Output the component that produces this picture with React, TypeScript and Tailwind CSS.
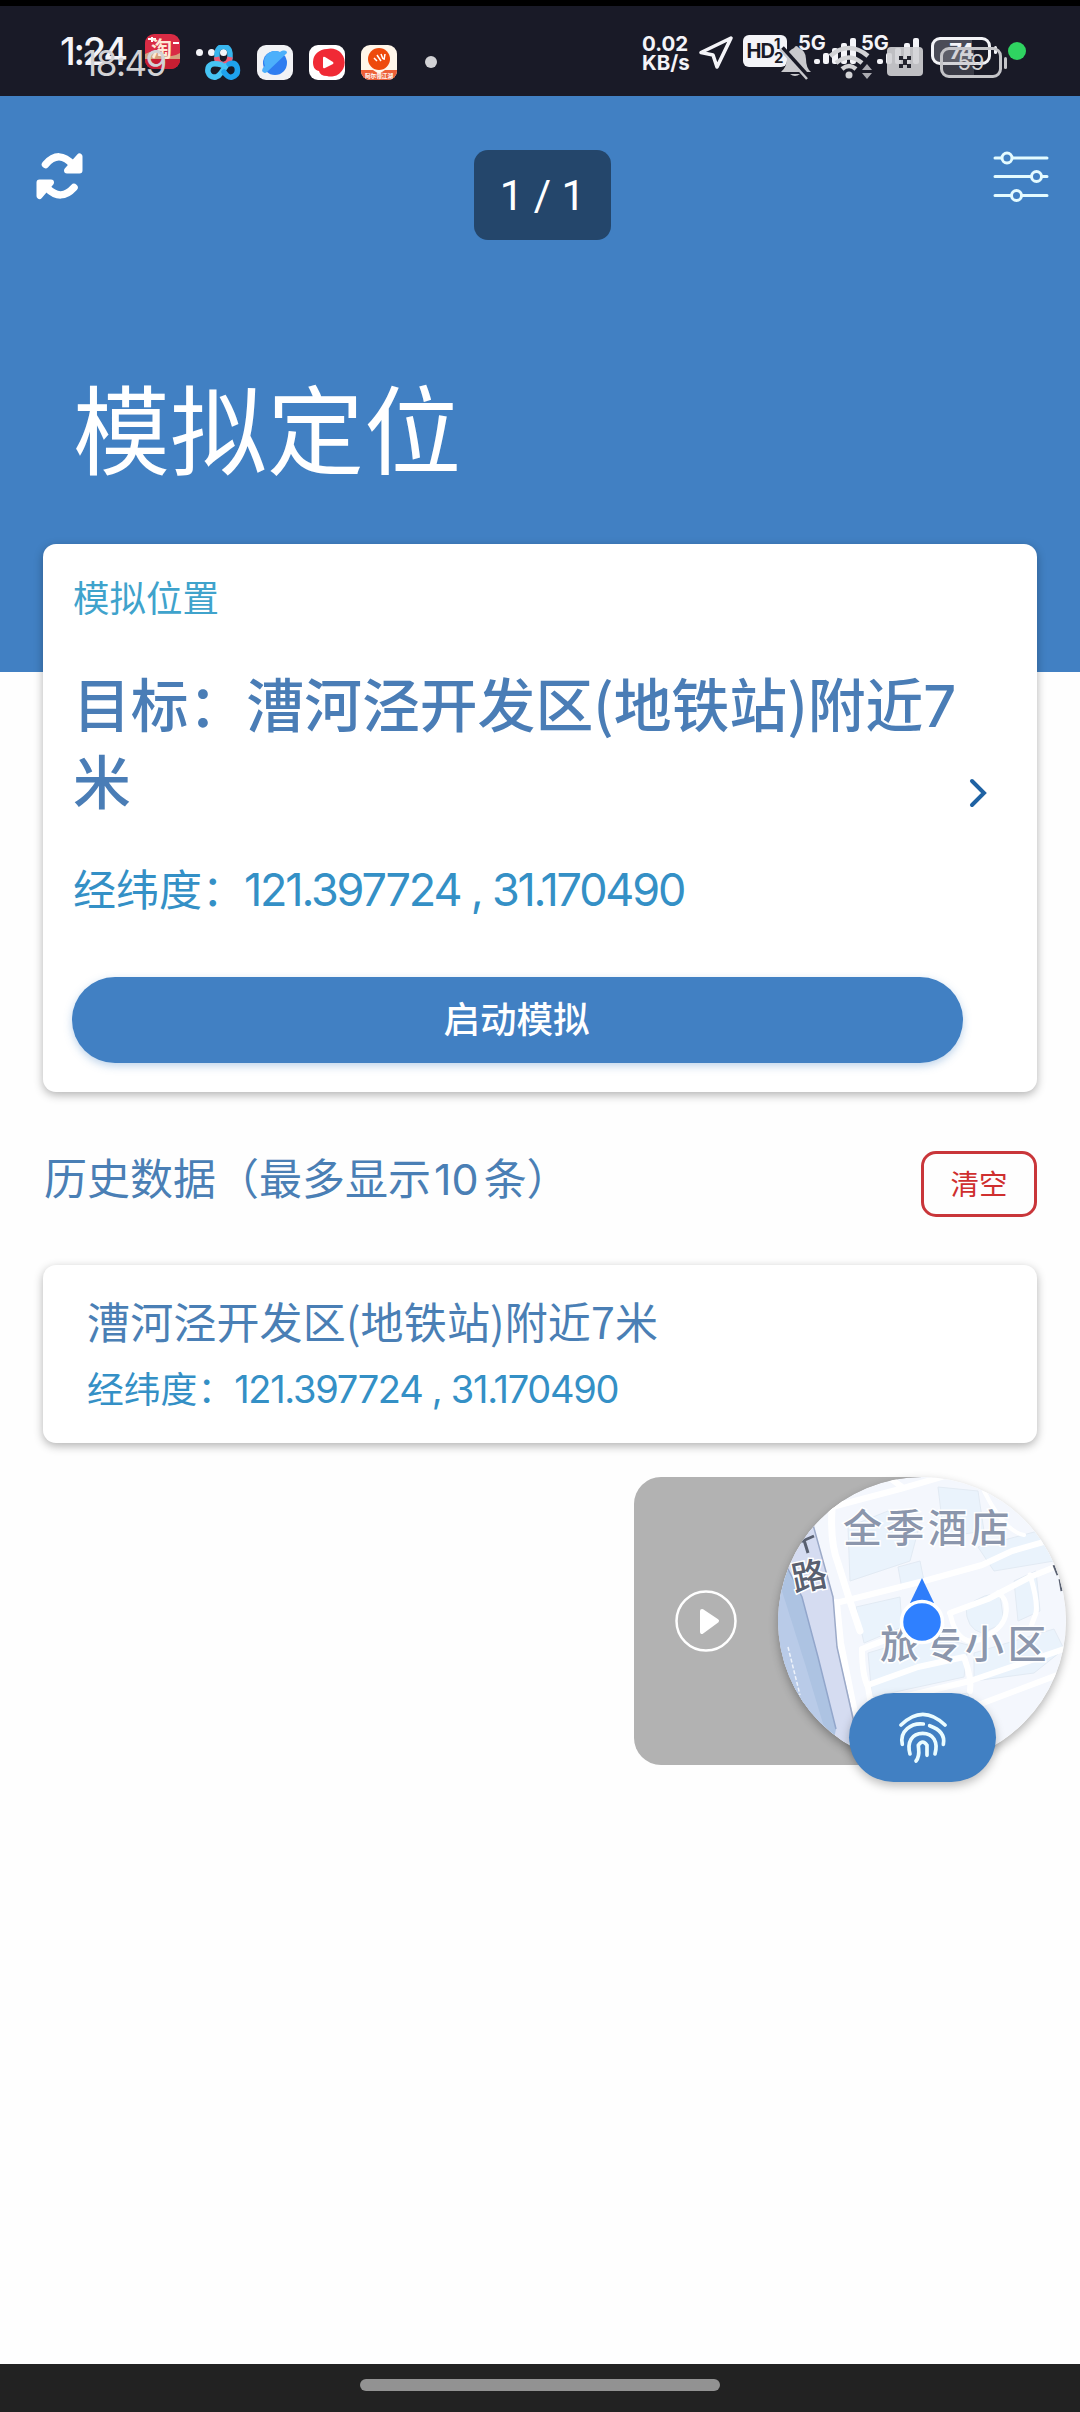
import type { ReactNode } from 'react'

const history = [{ id: 1, name: '漕河泾开发区(地铁站)附近7米', coords: '121.397724 , 31.170490' }]

function Signal() {
  return (
    <svg width="42" height="28" viewBox="0 0 42 28" fill="#f4f4f8">
      <rect x="0" y="22" width="6" height="5" rx="2" />
      <rect x="9" y="16" width="6" height="11" rx="2" />
      <rect x="18" y="11" width="6" height="16" rx="2" />
      <rect x="27" y="6" width="6" height="21" rx="2" />
      <rect x="36" y="1" width="6" height="26" rx="2" />
    </svg>
  )
}

function AppIcon({ children, className }: { children: ReactNode; className: string }) {
  return (
    <div className={`h-[35px] w-9 shrink-0 overflow-hidden rounded-[9px] ${className}`}>
      <svg width="36" height="35" viewBox="0 0 36 35">
        {children}
      </svg>
    </div>
  )
}

function StatusBar() {
  return (
    <div className="relative h-24 shrink-0 border-t-[6px] border-black bg-[#191a27] font-['Inter','Noto_Sans_CJK_SC',sans-serif]">
      <div className="flex h-full items-start pt-7 text-[#f4f4f8]">
        <span className="ml-[60px] w-[85px] shrink-0 text-[38px] leading-[35px] font-medium tracking-[-2.3px]">1:24</span>
        <div className="relative h-[35px] w-[35px] shrink-0 overflow-hidden rounded-[9px] bg-[#d92b44]">
          <svg width="35" height="35" viewBox="0 0 35 35">
            <path d="M0 20q8-5 17 0t18-1v6H0z" fill="#d3a07c" />
            <path d="M0 25h35v10H0z" fill="#c81e32" />
            <path d="M3 5h8M7 3v5M28 9h6" stroke="#fff" strokeWidth="2" />
            <text x="6" y="22" fontSize="21" fontWeight="700" fill="#ffe9d6">淘</text>
          </svg>
        </div>
        <div className="mt-[15px] ml-4 flex gap-[5px]">
          <i className="h-[7px] w-[7px] rounded-full bg-[#f4f4f8]" />
          <i className="h-[7px] w-[7px] rounded-full bg-[#f4f4f8]" />
          <i className="h-[7px] w-[7px] rounded-full bg-[#f4f4f8]" />
        </div>
        <div className="ml-[415px] w-[56px] shrink-0 text-[20.500px] leading-[19px] font-bold">
          <div>0.02</div>
          <div>KB/s</div>
        </div>
        <svg className="mt-px shrink-0" width="36" height="36" viewBox="0 0 36 36" fill="none" stroke="#f4f4f8" strokeWidth="3.6" strokeLinejoin="round">
          <path d="M33 3 L3 17.500 L15 20 L19 32 Z" />
        </svg>
        <div className="mt-px ml-[9px] flex h-8 w-[44px] shrink-0 items-center justify-center rounded-md bg-[#f4f4f8] text-[#191a27]">
          <span className="text-[20px] font-bold tracking-[-1px]">HD</span>
          <span className="text-[15px] leading-[14px] font-bold">
            1<br />2
          </span>
        </div>
        <span className="ml-[11px] w-4 shrink-0 text-[20px] leading-[19px] font-bold">5G</span>
        <div className="mt-[3px] shrink-0">
          <Signal />
        </div>
        <span className="ml-[5px] w-4 shrink-0 text-[20px] leading-[19px] font-bold">5G</span>
        <div className="mt-[3px] shrink-0">
          <Signal />
        </div>
        <div className="mt-[3px] ml-3 flex h-[28px] w-[60px] shrink-0 items-center justify-center rounded-[9px] border-[3.500px] border-[#f4f4f8] bg-gradient-to-r from-[#4b4c58] from-70% to-transparent to-70% text-[22px] font-bold tracking-[-1.5px]">
          74
        </div>
        <i className="mt-3 ml-[3px] h-2 w-[3px] rounded-sm bg-[#f4f4f8]" />
        <i className="mt-2 ml-[11px] h-[18px] w-[18px] shrink-0 rounded-full bg-[#2fd361]" />
      </div>

      {/* second status row, shown through the first one */}
      <div className="absolute inset-0 flex items-start pt-[39px] text-[#d2d2d5]">
        <span className="ml-[83px] w-[122px] shrink-0 text-[35px] leading-[36px] tracking-[-1.5px]">18:49</span>
        <svg className="shrink-0" width="36" height="36" viewBox="0 0 36 36" fill="none" strokeWidth="5.500" strokeLinecap="round">
          <path d="M12 8a6.500 6.500 0 0 1 13 0v5a6.500 6.500 0 0 1-13 0z" stroke="#38b6ee" />
          <path d="M11.500 12q1 7 6.500 8 6-1 7-8" stroke="#ef5a72" strokeLinecap="butt" />
          <path d="M17 20q-6-2-10-1-5 2-4 8 2 6 8 5 3-1 5-4l5-7" stroke="#46c4f4" />
          <path d="M24 19q6-2 8 3 2 8-5 10-4 1-8-5" stroke="#1ea2ee" />
        </svg>
        <AppIcon className="ml-4 bg-[#f1f2f5]">
          <circle cx="18" cy="18" r="12" fill="#2f7df0" />
          <path d="M6 27c-2-1 0-5 2-6C4 11 14 3 23 7c3-2 7-2 7 1L10 27q-2 2-4 0z" fill="#4db0fb" />
        </AppIcon>
        <AppIcon className="ml-4 bg-white">
          <path d="M18 4a14 14 0 1 1 0 27q-7 0-8-5c-5-1-6-5-6-9A14 13 0 0 1 18 4z" fill="#f02a35" />
          <path d="M14 13q0-2 2-1l8 5q1 1 0 2l-8 4q-2 1-2-1z" fill="#fff" />
        </AppIcon>
        <AppIcon className="ml-4 bg-[#fff6ea]">
          <path d="M0 25h12l6 4 6-4h12v10H0z" fill="#ed6038" />
          <circle cx="18" cy="14" r="11" fill="#ee4a0c" />
          <path d="M13 13l3 3M16 10l4 6M20 9l2 5M24 9l-1 6" stroke="#fff" strokeWidth="1.500" />
          <text x="4" y="33" fontSize="5.600" fontWeight="700" fill="#fff">阿尔领江湖</text>
        </AppIcon>
        <i className="mt-[11px] ml-[28px] h-3 w-3 shrink-0 rounded-full bg-[#d2d2d5]" />
        <svg className="ml-[342px] shrink-0" width="34" height="36" viewBox="0 0 34 36" fill="#c9c9cd">
          <path d="M2 27q6-5 6-14 1-8 7-10 2-4 5 0 7 3 7 11 0 9 5 13z" />
          <path d="M11 29h10q-5 4-10 0z" />
          <path d="M3 3L30 33" stroke="#191a27" strokeWidth="5" />
          <path d="M1 4L28 34" stroke="#c9c9cd" strokeWidth="2.500" />
        </svg>
        <svg className="ml-[16px] shrink-0" width="48" height="36" viewBox="0 0 48 36" fill="none" stroke="#d2d2d5" strokeWidth="4.500">
          <path d="M1 11Q20-5 39 11M7 18q13-11 26 0M13 24q7-6 14 0" />
          <circle cx="20" cy="30" r="3.500" fill="#d2d2d5" stroke="none" />
          <path d="M33 25l5-6 5 6zM33 28l5 6 5-6z" fill="#aaaab0" stroke="none" />
        </svg>
        <div className="mt-0.5 ml-[10px] flex h-[29px] w-9 shrink-0 items-center justify-center rounded-[4px] bg-[#d2d2d5]/90">
          <svg width="16" height="16" viewBox="0 0 16 16" fill="#24252f">
            <path d="M2 2h4v4H2zM10 2h4v4h-4zM2 10h4v4H2zM10 10h4v4h-4zM6 5h4v6H6z" />
          </svg>
        </div>
        <div className="mt-0.5 ml-[17px] flex h-[31px] w-[62px] shrink-0 items-center justify-center rounded-[9px] border-[3px] border-[#c4c4c8] bg-gradient-to-r from-[#888890]/30 from-55% to-transparent to-55% text-[22px]">
          59
        </div>
        <i className="mt-3 ml-[2px] h-3 w-[3px] rounded-sm bg-[#c4c4c8]" />
      </div>
    </div>
  )
}

function Header() {
  return (
    <header className="h-[576px] shrink-0 bg-[#4180c3] text-white">
      <div className="flex items-start pt-[54px]">
        <svg className="mt-0.5 ml-[35px]" width="50" height="50" viewBox="0 0 50 50" fill="none" stroke="#fff" strokeLinecap="round" strokeLinejoin="round">
          <path d="M10.500 12.500Q24-3 38 13" strokeWidth="7.500" />
          <path d="M44.500 4.500V18.500H32Z" strokeWidth="6" fill="#fff" />
          <path d="M39 35.500Q26 50 12 36" strokeWidth="7.500" />
          <path d="M4.500 44V30.500H16Z" strokeWidth="6" fill="#fff" />
        </svg>
        <div className="ml-[389px] flex h-[90px] w-[137px] items-center justify-center rounded-[14px] bg-[#24466b] font-['Roboto',sans-serif] text-[42px]">
          1 / 1
        </div>
        <svg className="ml-[382px]" width="56" height="54" viewBox="0 0 56 54" fill="#4180c3" stroke="#e4fbff" strokeWidth="3" strokeLinecap="round">
          <path d="M2 8H54M2 26.500H54M2 45.500H54" />
          <circle cx="14" cy="8" r="5" />
          <circle cx="43.500" cy="26.500" r="5" />
          <circle cx="23.500" cy="45.500" r="5" />
        </svg>
      </div>
      <h1 className="mt-[135px] ml-[73px] text-[97px] leading-[100px] font-normal">模拟定位</h1>
    </header>
  )
}

function TargetCard() {
  return (
    <section className="mx-[43px] -mt-32 flex h-[548px] shrink-0 flex-col rounded-[13px] bg-white pl-[30px] shadow-[0_3px_10px_rgba(0,0,0,0.3)]">
      <div className="mt-[34px] text-[36.500px] leading-[38px] text-[#3fa3cc]">模拟位置</div>
      <div className="relative mt-[48px] flex">
        <p className="w-[900px] text-[57.800px] leading-[77px] font-medium text-[#4a7db6]">
          目标：漕河泾开发区(地铁站)附近<span className="font-['Inter'] leading-none">7</span>
          <br />米
        </p>
        <svg className="absolute top-[113px] left-[895px]" width="20" height="32" viewBox="0 0 20 32" fill="none" stroke="#1f62a3" strokeWidth="4" strokeLinecap="round">
          <path d="M4 4L16 16L4 28" />
        </svg>
      </div>
      <div className="mt-[46px] text-[43px] leading-[46px] whitespace-nowrap text-[#3490c6]">
        经纬度：<span className="-ml-px font-['Inter'] text-[45px] leading-none tracking-[-2.2px]">121.397724 , 31.170490</span>
      </div>
      <button className="mt-auto mb-[29px] -ml-px h-[86px] w-[891px] rounded-full bg-[#4180c3] pr-0.5 pb-1 text-[36.500px] font-medium text-white shadow-[0_3px_8px_rgba(65,128,195,0.35)]">
        启动模拟
      </button>
    </section>
  )
}

function HistoryList() {
  return (
    <section className="mx-[43px] shrink-0">
      <div className="mt-[59px] flex h-[66px] items-start justify-between">
        <h2 className="mt-0.5 ml-px text-[43px] leading-[46px] font-normal whitespace-nowrap text-[#4a7fb5]">
          历史数据（最多显示<span className="mr-[5px] ml-[3px] font-['Inter'] leading-none">10</span>条）
        </h2>
        <button className="h-[66px] w-[116px] rounded-[15px] border-[3px] border-[#c9363a] pb-0.5 text-[28.500px] text-[#cf2f2f]">清空</button>
      </div>
      {history.map((item) => (
        <div key={item.id} className="mt-12 h-[178px] rounded-[13px] bg-white pl-11 shadow-[0_3px_10px_rgba(0,0,0,0.3)]">
          <div className="pt-[32px] text-[43px] leading-[46px] tracking-[0.15px] text-[#4a7fb5]">{item.name}</div>
          <div className="mt-[24px] text-[36.800px] leading-[40px] text-[#3490c6]">
            经纬度：<span className="font-['Inter'] text-[38px] tracking-[-1.3px]">{item.coords}</span>
          </div>
        </div>
      ))}
    </section>
  )
}

function MiniMap() {
  return (
    <svg className="block rounded-full shadow-[0_4px_10px_rgba(0,0,0,0.3)]" width="288" height="288" viewBox="0 0 288 288">
      <defs>
        <clipPath id="lens">
          <circle cx="144" cy="144" r="144" />
        </clipPath>
      </defs>
      <g clipPath="url(#lens)">
        <rect width="288" height="288" fill="#f4f7fd" />
        <g fill="#eaf3fc" stroke="#e2eaf3" strokeWidth="1">
          <path d="M70 50l40-16 30 20-8 30-60 20z" />
          <path d="M160 10l40 4 6 40-40 6z" />
          <path d="M120 90l22-6 4 20-22 8z" />
          <path d="M78 130l44-10 2 30-38 16z" />
          <path d="M188 130q20-16 34-12l4 28-22 10q-16-4-16-26z" />
          <path d="M236 104l22-10 4 40-22 10z" />
          <path d="M90 176l60-18 40 10-4 32-92 20z" />
          <path d="M196 176l80-24 10 20-30 24-60 8z" />
          <path d="M110 230l80-14 10 60-80 4z" />
          <path d="M200 70l60-16 16 30-60 10z" />
        </g>
        <g fill="none" stroke="#fff" strokeWidth="6" strokeLinecap="round" strokeLinejoin="round">
          <path d="M54 30L84 22L122 12L170-2M108-2l16 12" />
          <path d="M54 32q-2 34 6 54l10 32 12 36" strokeWidth="7" />
          <path d="M58 126l16-4 72-18 58-16 30-14 56-16" />
          <path d="M172 136l38-14 42-22 40-16" />
          <path d="M84 172q0 26 6 38l4 24M84 172q40-16 60-20" />
          <path d="M172 136q4 20 14 26t24-4q16-8 18-22t-8-20M252 98q8 26 6 38l-6 16" strokeWidth="5" />
          <path d="M90 208l50-18 46-10q8 22 6 34" />
          <path d="M92 228l100-24 100-34M110 250l90-22 90-34" />
          <path d="M58 126l4 40 18 90" strokeWidth="8" />
          <path d="M206 14q20 40 40 44" strokeWidth="4" />
        </g>
        <path d="M-10 30L34 44L55 120L59 170L78 250L60 290H-10z" fill="#d5dcf1" />
        <path d="M-10 70L9 90L24 120L40 180L58 252L50 290H-10z" fill="#adc3e2" />
        <path d="M-10 90L4 114L28 190L46 250L40 290H-10z" fill="#b9cbe8" />
        <path d="M34 44L55 120L59 170L76 246" fill="none" stroke="#9caac8" strokeWidth="1.500" />
        <path d="M9 90L24 120L40 180L58 252" fill="none" stroke="#92a6cb" strokeWidth="1.500" />
        <path d="M10 170l12 48" stroke="#eef3fb" strokeWidth="1.500" strokeDasharray="4 2" />
        <g fontWeight="500" fill="#8b96ac" stroke="#fff" strokeWidth="3" paintOrder="stroke" fontSize="39">
          <text x="65" y="65" letterSpacing="3.500">全季酒店</text>
          <text x="102" y="181" letterSpacing="3.500">旅专小区</text>
        </g>
        <text x="14" y="112" fontSize="35" fontWeight="500" fill="#596070" stroke="#fff" strokeWidth="3" paintOrder="stroke" transform="rotate(-12 31 100)">
          路
        </text>
        <path d="M20 66l16-7M26 63l4 13M276 88l4 10M282 102l2 12" stroke="#596070" strokeWidth="3" />
        <path d="M144 101L156 126H132Z" fill="#2f7dfa" />
        <circle cx="144" cy="145" r="20.500" fill="#2f80ff" stroke="#fff" strokeWidth="3.500" />
      </g>
    </svg>
  )
}

function FloatingWidget() {
  return (
    <div className="relative mt-[34px] ml-[634px] flex shrink-0">
      <div className="flex h-72 w-72 items-center rounded-l-[27px] bg-[#b2b2b2] pl-[41px]">
        <svg width="62" height="62" viewBox="0 0 62 62">
          <circle cx="31" cy="31" r="29.500" fill="none" stroke="#fff" strokeWidth="2.500" />
          <path d="M27 21L42 31L27 42Z" fill="#fff" stroke="#fff" strokeWidth="4" strokeLinejoin="round" />
        </svg>
      </div>
      <div className="-ml-36">
        <MiniMap />
      </div>
      <div className="absolute top-[216px] left-[215px] flex h-[89px] w-[147px] items-center justify-center rounded-full bg-[#4180c3] shadow-[0_4px_10px_rgba(0,0,0,0.25)]">
        <svg width="52" height="55" viewBox="829 750 156 165" fill="none" stroke="#eafcff" strokeWidth="11" strokeLinecap="round">
          <path d="M841 795Q906 731 973 795" />
          <path d="M845 853C836 812 872 788 908 792M927 797Q976 814 968 853" />
          <path d="M868 882C858 846 874 820 906 820S953 846 943 882" />
          <path d="M886 903C900 886 893 868 893 856Q906 836 919 856V886" />
        </svg>
      </div>
    </div>
  )
}

export default function App() {
  return (
    <div className="flex h-[2412px] w-[1080px] flex-col overflow-hidden bg-[#fefefe] font-['Noto_Sans_CJK_SC',sans-serif]">
      <StatusBar />
      <Header />
      <TargetCard />
      <HistoryList />
      <FloatingWidget />
      <div className="mt-auto flex h-12 shrink-0 justify-center bg-[#222222] pt-[15px]">
        <div className="h-3 w-[360px] rounded-full bg-[#929292]" />
      </div>
    </div>
  )
}
